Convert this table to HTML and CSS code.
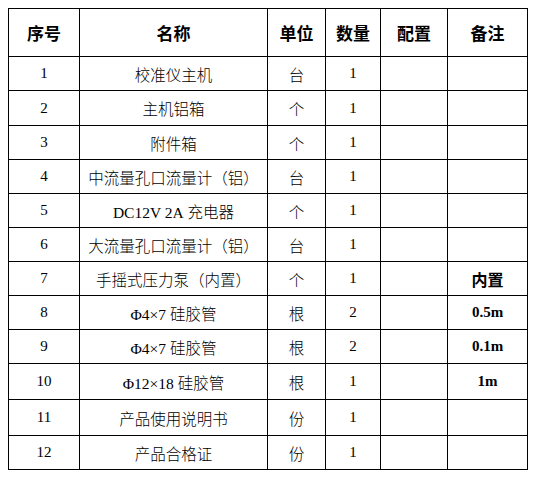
FILE: index.html
```html
<!DOCTYPE html>
<html lang="zh">
<head>
<meta charset="utf-8">
<link rel="stylesheet" href="styles.css">
</head>
<body>
<table class="list">
  <colgroup>
    <col class="c-no"><col class="c-name"><col class="c-unit"><col class="c-qty"><col class="c-cfg"><col class="c-note">
  </colgroup>
  <thead>
    <tr class="head"><th>序号</th><th>名称</th><th>单位</th><th>数量</th><th>配置</th><th>备注</th></tr>
  </thead>
  <tbody>
    <tr class="r34"><td class="num">1</td><td>校准仪主机</td><td>台</td><td class="num">1</td><td></td><td></td></tr>
    <tr class="r35"><td class="num">2</td><td>主机铝箱</td><td>个</td><td class="num">1</td><td></td><td></td></tr>
    <tr class="r34"><td class="num">3</td><td>附件箱</td><td>个</td><td class="num">1</td><td></td><td></td></tr>
    <tr class="r34"><td class="num">4</td><td>中流量孔口流量计（铝）</td><td>台</td><td class="num">1</td><td></td><td></td></tr>
    <tr class="r34"><td class="num">5</td><td><span class="lat">DC12V 2A</span> 充电器</td><td>个</td><td class="num">1</td><td></td><td></td></tr>
    <tr class="r34"><td class="num">6</td><td>大流量孔口流量计（铝）</td><td>台</td><td class="num">1</td><td></td><td></td></tr>
    <tr class="r34"><td class="num">7</td><td>手摇式压力泵（内置）</td><td>个</td><td class="num">1</td><td></td><td class="note">内置</td></tr>
    <tr class="r34"><td class="num">8</td><td><span class="lat">Φ4×7</span> 硅胶管</td><td>根</td><td class="num">2</td><td></td><td class="note lat">0.5m</td></tr>
    <tr class="r34"><td class="num">9</td><td><span class="lat">Φ4×7</span> 硅胶管</td><td>根</td><td class="num">2</td><td></td><td class="note lat">0.1m</td></tr>
    <tr class="r36"><td class="num">10</td><td><span class="lat">Φ12×18</span> 硅胶管</td><td>根</td><td class="num">1</td><td></td><td class="note lat">1m</td></tr>
    <tr class="r36"><td class="num">11</td><td>产品使用说明书</td><td>份</td><td class="num">1</td><td></td><td></td></tr>
    <tr class="r34"><td class="num">12</td><td>产品合格证</td><td>份</td><td class="num">1</td><td></td><td></td></tr>
  </tbody>
</table>
</body>
</html>
```

FILE: styles.css
```css
html, body {
  margin: 0;
  padding: 0;
  background: #ffffff;
}
body {
  padding: 8px 0 0 8px;
  font-family: "Liberation Serif", "Noto Sans CJK SC", serif;
  color: #000;
}
.list {
  border-collapse: collapse;
  table-layout: fixed;
  width: 519px;
}
.c-no { width: 71px; }
.c-name { width: 188px; }
.c-unit { width: 58px; }
.c-qty { width: 55px; }
.c-cfg { width: 67px; }
.c-note { width: 80px; }
.list th, .list td {
  border: 1px solid #000;
  padding: 0;
  text-align: center;
  vertical-align: middle;
  white-space: nowrap;
}
.list td {
  font-family: "Liberation Serif", "Noto Sans CJK SC", serif;
  font-size: 15.5px;
  font-weight: 300;
}
.list th {
  font-family: "Noto Sans CJK SC", sans-serif;
  font-size: 17px;
  font-weight: 700;
  height: 47px;
}
.list td.num {
  font-size: 15px;
  font-weight: 400;
}
.lat {
  font-family: "Liberation Serif", serif;
  font-weight: 400;
}
.list td.note {
  font-family: "Noto Sans CJK SC", sans-serif;
  font-weight: 700;
  font-size: 16px;
}
.list td.note.lat {
  font-family: "Liberation Serif", serif;
  font-size: 15px;
}
.r34 td { height: 33px; }
.r35 td { height: 34px; }
.r36 td { height: 35px; }
```
